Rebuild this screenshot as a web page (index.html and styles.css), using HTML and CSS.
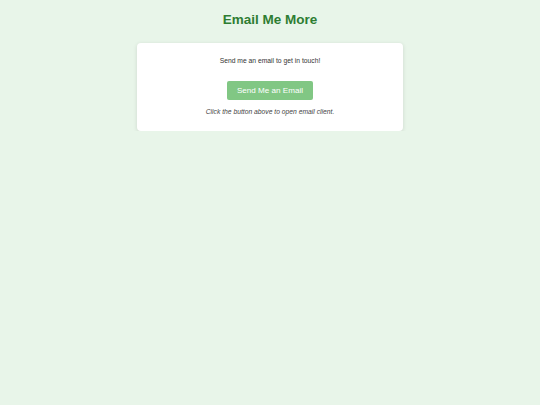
FILE: index.html
```html
<!DOCTYPE html>
<html lang="en">
<head>
<meta charset="utf-8">
<title>Email Me More</title>
<link rel="stylesheet" href="styles.css">
</head>
<body>
<main class="page">
  <h1 class="title">Email Me More</h1>
  <section class="card">
    <p class="intro">Send me an email to get in touch!</p>
    <a class="button" href="mailto:">Send Me an Email</a>
    <p class="note">Click the button above to open email client.</p>
  </section>
</main>
</body>
</html>
```
FILE: styles.css
```css
html, body {
  margin: 0;
  padding: 0;
  background: #e8f5e9;
  font-family: "Liberation Sans", Arial, sans-serif;
  color: #333;
}
.page {
  display: flex;
  flex-direction: column;
  align-items: center;
  padding-top: 12px;
}
.title {
  margin: 0;
  font-size: 13.5px;
  line-height: 16px;
  font-weight: bold;
  color: #2e7d32;
}
.card {
  margin-top: 15px;
  width: 266px;
  box-sizing: border-box;
  background: #fff;
  border-radius: 4px;
  box-shadow: 0 1px 4px rgba(0, 0, 0, 0.12);
  padding: 13px 13.5px 14px;
  display: flex;
  flex-direction: column;
  align-items: center;
}
.intro {
  margin: 0;
  font-size: 6.75px;
  line-height: 10px;
}
.button {
  margin-top: 15px;
  width: 86px;
  height: 19px;
  box-sizing: border-box;
  display: flex;
  align-items: center;
  justify-content: center;
  background: #81c784;
  color: #fff;
  font-size: 8.1px;
  border-radius: 2px;
  text-decoration: none;
}
.note {
  margin: 7px 0 0;
  font-size: 6.75px;
  line-height: 10px;
  font-style: italic;
  color: #444;
}
```
